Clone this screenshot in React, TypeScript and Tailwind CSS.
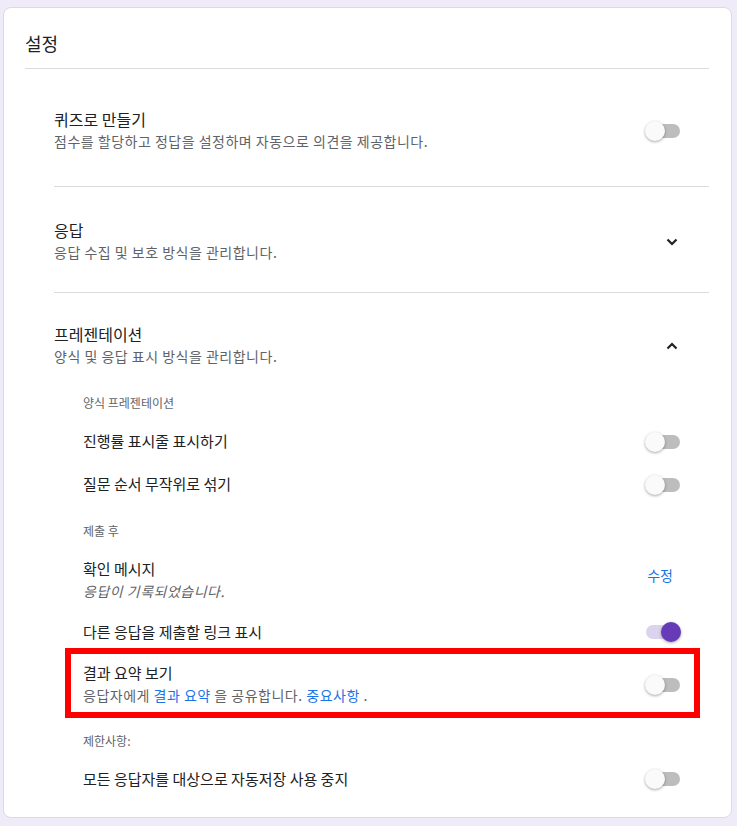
import React from "react";

const FONT = { fontFamily: '"Noto Sans CJK KR", Roboto, "Noto Sans", sans-serif' };

function Toggle({ on = false, cls = "" }: { on?: boolean; cls?: string }) {
  return (
    <div className={"relative h-[20px] w-[36px] shrink-0 " + cls}>
      <div
        className={
          "absolute left-[1px] top-[3px] h-[14px] w-[34px] rounded-full " +
          (on ? "bg-[#dcd3ef]" : "bg-[#bdbdbd]")
        }
      />
      {on ? (
        <div className="absolute right-0 top-0 h-[20px] w-[20px] rounded-full bg-[#673ab7] shadow-[0_1px_3px_rgba(0,0,0,0.35)]" />
      ) : (
        <div className="absolute left-0 top-0 h-[20px] w-[20px] rounded-full bg-[#fafafa] shadow-[0_1px_3px_rgba(0,0,0,0.35)]" />
      )}
    </div>
  );
}

function Chevron({ up = false }: { up?: boolean }) {
  return (
    <svg width="12" height="8" viewBox="0 0 12 8" className="mr-[3px] mt-[4px]">
      <path
        d={up ? "M1.5 6.5 L6 2 L10.5 6.5" : "M1.5 1.5 L6 6 L10.5 1.5"}
        fill="none"
        stroke="#202124"
        strokeWidth="2.2"
      />
    </svg>
  );
}

function Section({
  title,
  desc,
  right,
  pt,
  pb,
}: {
  title: string;
  desc: string;
  right: React.ReactNode;
  pt: string;
  pb: string;
}) {
  return (
    <div className={"flex items-center justify-between pr-[28px] " + pt + " " + pb}>
      <div className="flex flex-col">
        <div className="text-[16px] leading-[24px] text-[#202124]">{title}</div>
        <div className="text-[14px] leading-[20px] tracking-[0.5px] text-[#5f6368]">{desc}</div>
      </div>
      {right}
    </div>
  );
}

function SubLabel({ text, cls }: { text: string; cls: string }) {
  return <div className={"text-[12px] leading-[16px] text-[#5f6368] " + cls}>{text}</div>;
}

function SubRow({ text, on = false }: { text: string; on?: boolean }) {
  return (
    <div className="flex h-[43px] items-center justify-between">
      <div className="text-[15px] text-[#202124]">{text}</div>
      <Toggle on={on} />
    </div>
  );
}

export default function App() {
  return (
    <div className="min-h-[826px] bg-[#f0ebf8] pb-[7px] pl-[3px] pr-[5px] pt-[7px]" style={FONT}>
      <div className="rounded-[8px] border border-[#dadce0] bg-white pb-[17px] pl-[21px] pr-[22px]">
        <div className="pb-[13px] pt-[23px] text-[18px] leading-[24px] text-[#202124]">설정</div>
        <div className="h-px bg-[#dadce0]" />
        <div className="pl-[29px]">
          <Section
            title="퀴즈로 만들기"
            desc="점수를 할당하고 정답을 설정하며 자동으로 의견을 제공합니다."
            right={<Toggle cls="mt-[4px]" />}
            pt="pt-[38px]"
            pb="pb-[35px]"
          />
          <div className="h-px bg-[#dadce0]" />
          <Section
            title="응답"
            desc="응답 수집 및 보호 방식을 관리합니다."
            right={<Chevron />}
            pt="pt-[31px]"
            pb="pb-[30px]"
          />
          <div className="h-px bg-[#dadce0]" />
          <Section
            title="프레젠테이션"
            desc="양식 및 응답 표시 방식을 관리합니다."
            right={<Chevron up />}
            pt="pt-[29px]"
            pb="pb-[0px]"
          />
          <div className="pl-[29px] pr-[28px]">
            <SubLabel text="양식 프레젠테이션" cls="mt-[29px]" />
            <div className="mt-[9px]">
              <SubRow text="진행률 표시줄 표시하기" />
              <SubRow text="질문 순서 무작위로 섞기" />
            </div>
            <SubLabel text="제출 후" cls="mt-[17px]" />
            <div className="mt-[18px] flex items-start justify-between">
              <div className="flex flex-col">
                <div className="text-[15px] leading-[24px] text-[#202124]">확인 메시지</div>
                <div className="text-[14px] italic leading-[20px] tracking-[0.5px] text-[#5f6368]">
                  응답이 기록되었습니다.
                </div>
              </div>
              <div className="mr-[8px] mt-[8px] text-[14px] leading-[20px] text-[#1a73e8]">수정</div>
            </div>
            <div className="mt-[10px] flex h-[42px] items-center justify-between">
              <div className="text-[15px] text-[#202124]">다른 응답을 제출할 링크 표시</div>
              <Toggle on />
            </div>
            <div className="relative flex items-center justify-between pb-[5px] pt-[8px]">
              <div className="pointer-events-none absolute -bottom-[8px] -left-[18px] -right-[19px] -top-[5px] border-[6px] border-[#ff0000]" />
              <div className="flex flex-col">
                <div className="text-[15px] leading-[24px] text-[#202124]">결과 요약 보기</div>
                <div className="text-[14px] leading-[20px] tracking-[0.5px] text-[#5f6368]">
                  응답자에게 <span className="text-[#1a73e8]">결과 요약</span> 을 공유합니다.{" "}
                  <span className="text-[#1a73e8]">중요사항</span> .
                </div>
              </div>
              <Toggle cls="mt-[4px]" />
            </div>
            <SubLabel text="제한사항:" cls="mt-[23px]" />
            <div className="mt-[9px] flex h-[42px] items-center justify-between">
              <div className="text-[15px] text-[#202124]">모든 응답자를 대상으로 자동저장 사용 중지</div>
              <Toggle />
            </div>
          </div>
        </div>
      </div>
    </div>
  );
}
